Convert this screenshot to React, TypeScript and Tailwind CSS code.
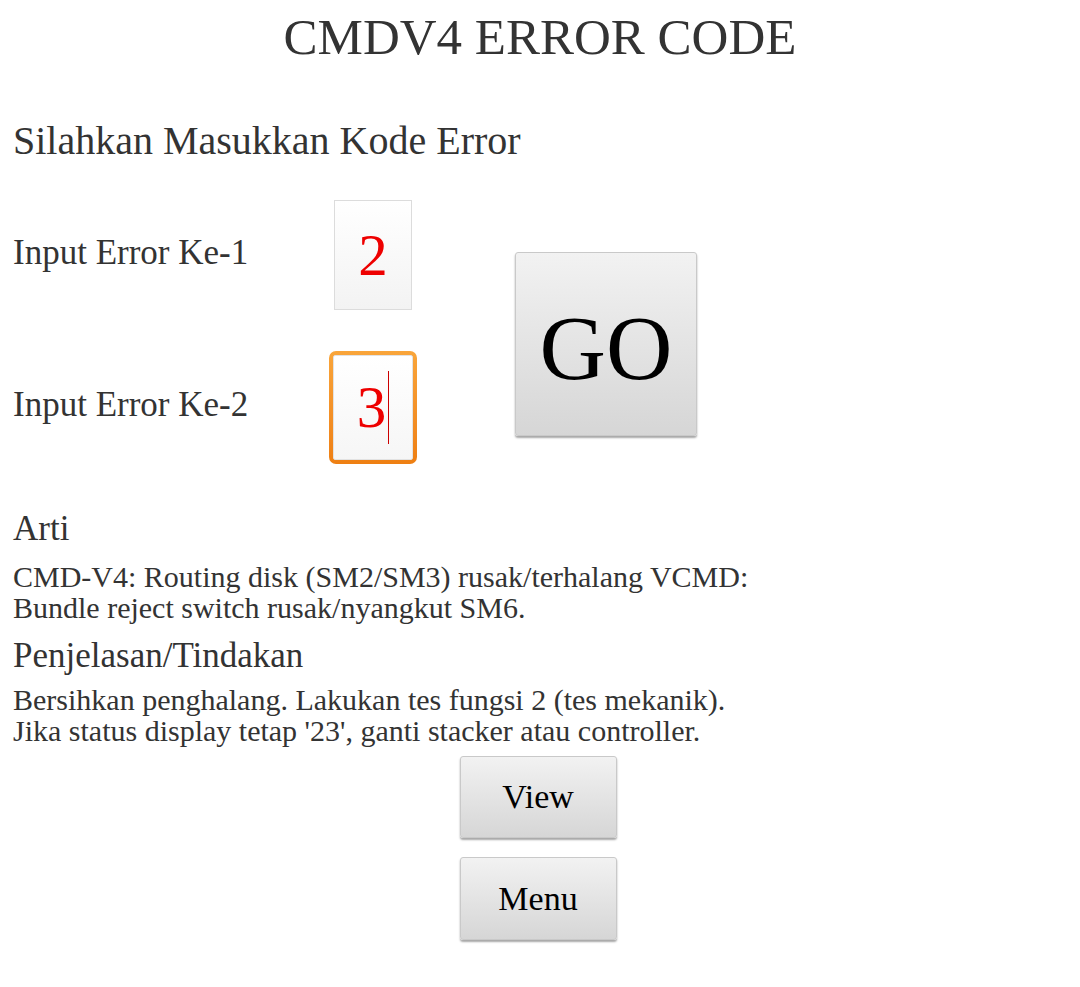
import React from "react";

const btn =
  "flex items-center justify-center rounded-[3px] border border-[#c9c9c9] bg-gradient-to-b from-[#f2f2f2] to-[#d6d6d6] shadow-[0_2px_2px_rgba(0,0,0,0.35)] text-black";

export default function App() {
  return (
    <div className="w-full min-h-[987px] bg-white font-['Liberation_Serif','Times_New_Roman',serif] text-[#333]">
      <h1 className="mt-[8px] text-center text-[51px] leading-[58px] font-normal">CMDV4 ERROR CODE</h1>

      <div className="px-[13px]">
        <h2 className="mt-[52px] text-[40px] leading-[46px]">Silahkan Masukkan Kode Error</h2>

        <div className="mt-[36px] flex items-start">
          <div className="flex flex-col">
            <div className="flex items-start">
              <div className="w-[321px] mt-[33px] text-[35px] leading-[40px]">Input Error Ke-1</div>
              <div className="w-[78px] h-[110px] border border-[#dcdcdc] bg-gradient-to-b from-white to-[#f3f3f3] flex items-center justify-center text-[59px] leading-none text-[#ee0000]">
                2
              </div>
            </div>
            <div className="mt-[41px] flex items-start">
              <div className="w-[316px] mt-[34px] text-[35px] leading-[40px]">Input Error Ke-2</div>
              <div className="w-[88px] h-[113px] rounded-[7px] bg-gradient-to-b from-[#f9a53a] to-[#ee7f12] p-[4px]">
                <div className="w-full h-full rounded-[2px] border border-[#e2e2e2] bg-gradient-to-b from-white to-[#f6f6f6] flex items-center justify-center text-[59px] leading-none text-[#ee0000]">
                  <span>3</span>
                  <span className="ml-[2px] w-[1px] h-[73px] bg-[#cc0000]" />
                </div>
              </div>
            </div>
          </div>

          <div className={`${btn} ml-[98px] mt-[52px] w-[182px] h-[184px] text-[92px] leading-none`}>
            <span className="mt-[8px]">GO</span>
          </div>
        </div>

        <h3 className="mt-[45px] text-[35px] leading-[40px]">Arti</h3>
        <p className="mt-[12px] text-[30px] leading-[31px]">
          CMD-V4: Routing disk (SM2/SM3) rusak/terhalang VCMD:
          <br />
          Bundle reject switch rusak/nyangkut SM6.
        </p>
        <h3 className="mt-[13px] text-[35px] leading-[40px]">Penjelasan/Tindakan</h3>
        <p className="mt-[8px] text-[30px] leading-[31px]">
          Bersihkan penghalang. Lakukan tes fungsi 2 (tes mekanik).
          <br />
          Jika status display tetap '23', ganti stacker atau controller.
        </p>
      </div>

      <div className="mt-[10px] pr-[4px] flex flex-col items-center gap-[19px]">
        <div className={`${btn} w-[157px] h-[82px] text-[34px] leading-none`}>View</div>
        <div className={`${btn} w-[157px] h-[83px] text-[34px] leading-none`}>Menu</div>
      </div>
    </div>
  );
}
